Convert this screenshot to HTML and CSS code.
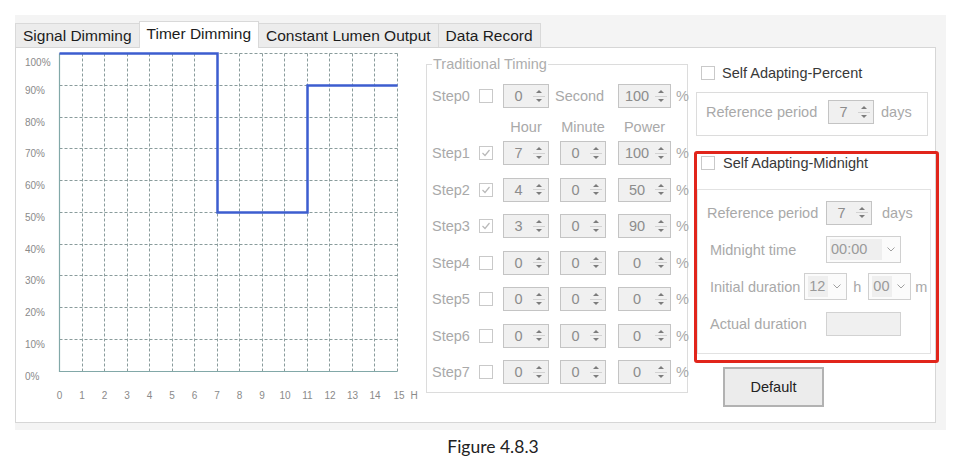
FILE: index.html
```html
<!DOCTYPE html>
<html>
<head>
    <title>Timer Dimming</title>
    <link rel="stylesheet" href="styles.css">
</head>
<body>
    <div class="window">
        <div class="tabs">
            <div class="tab">Signal Dimming</div>
            <div class="tab active">Timer Dimming</div>
            <div class="tab">Constant Lumen Output</div>
            <div class="tab">Data Record</div>
        </div>

        <div class="panel">
            <!-- dimming curve -->
            <svg class="chart" width="405" height="360" viewBox="16 48 405 360">
                <path class="grid" d="M82.5 53.5V371.5M104.5 53.5V371.5M127.5 53.5V371.5M149.5 53.5V371.5M172.5 53.5V371.5M194.5 53.5V371.5M217.5 53.5V371.5M239.5 53.5V371.5M262.5 53.5V371.5M284.5 53.5V371.5M307.5 53.5V371.5M329.5 53.5V371.5M352.5 53.5V371.5M374.5 53.5V371.5M397.5 53.5V371.5
                    M59.5 53.5H397.5M59.5 85.5H397.5M59.5 117.5H397.5M59.5 148.5H397.5M59.5 180.5H397.5M59.5 212.5H397.5M59.5 244.5H397.5M59.5 275.5H397.5M59.5 307.5H397.5M59.5 339.5H397.5"/>
                <path class="axis" d="M59.5 53.5V371.5H397.5"/>
                <path class="curve" d="M59.5 53.5H217.5V212.5H307.5V85.5H397.5"/>
                <g class="labels">
                    <text x="25" y="62">100%</text>
                    <text x="25" y="90.5">90%</text>
                    <text x="25" y="122">80%</text>
                    <text x="25" y="153.5">70%</text>
                    <text x="25" y="185.5">60%</text>
                    <text x="25" y="217">50%</text>
                    <text x="25" y="249">40%</text>
                    <text x="25" y="280.5">30%</text>
                    <text x="25" y="312.5">20%</text>
                    <text x="25" y="344">10%</text>
                    <text x="25" y="376">0%</text>
                </g>
                <g class="labels hours">
                    <text x="59.5" y="395">0</text>
                    <text x="82" y="395">1</text>
                    <text x="104.5" y="395">2</text>
                    <text x="127" y="395">3</text>
                    <text x="149.5" y="395">4</text>
                    <text x="172" y="395">5</text>
                    <text x="194.5" y="395">6</text>
                    <text x="217" y="395">7</text>
                    <text x="239.5" y="395">8</text>
                    <text x="262" y="395">9</text>
                    <text x="285" y="395">10</text>
                    <text x="307.5" y="395">11</text>
                    <text x="330" y="395">12</text>
                    <text x="352.5" y="395">13</text>
                    <text x="375" y="395">14</text>
                    <text x="399" y="395">15</text>
                    <text x="414" y="395">H</text>
                </g>
            </svg>

            <!-- Traditional Timing -->
            <fieldset class="timing">
                <legend>Traditional Timing</legend>

                <div class="step-row">
                    <span>Step0</span>
                    <span class="box"></span>
                    <span class="spin"><span class="val">0</span><span class="arrows"><i class="up"></i><i class="down"></i></span></span>
                    <span class="second">Second</span>
                    <span class="spin power"><span class="val">100</span><span class="arrows"><i class="up"></i><i class="down"></i></span></span>
                    <span>%</span>
                </div>

                <div class="head-row">
                    <span></span>
                    <span></span>
                    <span class="head">Hour</span>
                    <span class="head">Minute</span>
                    <span class="head power">Power</span>
                </div>

                <div class="step-row">
                    <span>Step1</span>
                    <span class="box"><svg viewBox="0 0 12 12"><polyline points="2.5,6 5,8.5 9.5,3"/></svg></span>
                    <span class="spin"><span class="val">7</span><span class="arrows"><i class="up"></i><i class="down"></i></span></span>
                    <span class="spin"><span class="val">0</span><span class="arrows"><i class="up"></i><i class="down"></i></span></span>
                    <span class="spin power"><span class="val">100</span><span class="arrows"><i class="up"></i><i class="down"></i></span></span>
                    <span>%</span>
                </div>
                <div class="step-row">
                    <span>Step2</span>
                    <span class="box"><svg viewBox="0 0 12 12"><polyline points="2.5,6 5,8.5 9.5,3"/></svg></span>
                    <span class="spin"><span class="val">4</span><span class="arrows"><i class="up"></i><i class="down"></i></span></span>
                    <span class="spin"><span class="val">0</span><span class="arrows"><i class="up"></i><i class="down"></i></span></span>
                    <span class="spin power"><span class="val">50</span><span class="arrows"><i class="up"></i><i class="down"></i></span></span>
                    <span>%</span>
                </div>
                <div class="step-row">
                    <span>Step3</span>
                    <span class="box"><svg viewBox="0 0 12 12"><polyline points="2.5,6 5,8.5 9.5,3"/></svg></span>
                    <span class="spin"><span class="val">3</span><span class="arrows"><i class="up"></i><i class="down"></i></span></span>
                    <span class="spin"><span class="val">0</span><span class="arrows"><i class="up"></i><i class="down"></i></span></span>
                    <span class="spin power"><span class="val">90</span><span class="arrows"><i class="up"></i><i class="down"></i></span></span>
                    <span>%</span>
                </div>
                <div class="step-row">
                    <span>Step4</span>
                    <span class="box"></span>
                    <span class="spin"><span class="val">0</span><span class="arrows"><i class="up"></i><i class="down"></i></span></span>
                    <span class="spin"><span class="val">0</span><span class="arrows"><i class="up"></i><i class="down"></i></span></span>
                    <span class="spin power"><span class="val">0</span><span class="arrows"><i class="up"></i><i class="down"></i></span></span>
                    <span>%</span>
                </div>
                <div class="step-row">
                    <span>Step5</span>
                    <span class="box"></span>
                    <span class="spin"><span class="val">0</span><span class="arrows"><i class="up"></i><i class="down"></i></span></span>
                    <span class="spin"><span class="val">0</span><span class="arrows"><i class="up"></i><i class="down"></i></span></span>
                    <span class="spin power"><span class="val">0</span><span class="arrows"><i class="up"></i><i class="down"></i></span></span>
                    <span>%</span>
                </div>
                <div class="step-row">
                    <span>Step6</span>
                    <span class="box"></span>
                    <span class="spin"><span class="val">0</span><span class="arrows"><i class="up"></i><i class="down"></i></span></span>
                    <span class="spin"><span class="val">0</span><span class="arrows"><i class="up"></i><i class="down"></i></span></span>
                    <span class="spin power"><span class="val">0</span><span class="arrows"><i class="up"></i><i class="down"></i></span></span>
                    <span>%</span>
                </div>
                <div class="step-row">
                    <span>Step7</span>
                    <span class="box"></span>
                    <span class="spin"><span class="val">0</span><span class="arrows"><i class="up"></i><i class="down"></i></span></span>
                    <span class="spin"><span class="val">0</span><span class="arrows"><i class="up"></i><i class="down"></i></span></span>
                    <span class="spin power"><span class="val">0</span><span class="arrows"><i class="up"></i><i class="down"></i></span></span>
                    <span>%</span>
                </div>
            </fieldset>

            <!-- Self adapting options -->
            <div class="adapt">
                <div class="check-row percent-row">
                    <span class="box"></span>
                    <span class="check-text">Self Adapting-Percent</span>
                </div>
                <div class="period-box">
                    <span class="period-label">Reference period</span>
                    <span class="spin"><span class="val">7</span><span class="arrows"><i class="up"></i><i class="down"></i></span></span>
                    <span class="unit">days</span>
                </div>

                <div class="highlight">
                    <div class="check-row midnight-row">
                        <span class="box"></span>
                        <span class="check-text">Self Adapting-Midnight</span>
                    </div>
                    <div class="midnight-box">
                        <div class="field">
                            <span class="field-label first">Reference period</span>
                            <span class="spin"><span class="val">7</span><span class="arrows"><i class="up"></i><i class="down"></i></span></span>
                            <span class="unit days">days</span>
                        </div>
                        <div class="field">
                            <span class="field-label">Midnight time</span>
                            <span class="combo wide"><span class="combo-val">00:00</span><svg class="chev" viewBox="0 0 8 5"><polyline points="0.5,0.5 4,4 7.5,0.5"/></svg></span>
                        </div>
                        <div class="field">
                            <span class="field-label short">Initial duration</span>
                            <span class="combo"><span class="combo-val">12</span><svg class="chev" viewBox="0 0 8 5"><polyline points="0.5,0.5 4,4 7.5,0.5"/></svg></span>
                            <span class="unit h">h</span>
                            <span class="combo"><span class="combo-val">00</span><svg class="chev" viewBox="0 0 8 5"><polyline points="0.5,0.5 4,4 7.5,0.5"/></svg></span>
                            <span class="unit m">m</span>
                        </div>
                        <div class="field">
                            <span class="field-label">Actual duration</span>
                            <span class="textbox"></span>
                        </div>
                    </div>
                </div>

                <button type="button" class="default-btn">Default</button>
            </div>
        </div>
    </div>

    <p class="caption">Figure 4.8.3</p>
</body>
</html>
```

FILE: styles.css
```css
body {
    margin: 0;
    background-color: white;
    font-family: "Liberation Sans", Arial, sans-serif;
    font-size: 14.5px;
    color: #a9a9a9;
}

.window {
    width: 921px;
    margin: 15px 0 0 15px;
    padding: 0 10px 7px 0;
    background-color: #f4f4f4;
}

/* tabs */
.tabs {
    display: flex;
    align-items: flex-end;
    height: 32px;
}

.tab {
    box-sizing: border-box;
    height: 24px;
    line-height: 23px;
    padding: 0 7px;
    margin-right: -1px;
    border: 1px solid #d9d9d9;
    border-bottom: none;
    background-color: #ececec;
    color: #1c1c1c;
    font-size: 15.5px;
}

.tab.active {
    position: relative;
    z-index: 1;
    height: 27px;
    line-height: 24px;
    margin-bottom: -1px;
    background-color: white;
}

.panel {
    display: flex;
    align-items: flex-start;
    height: 374px;
    border: 1px solid #d6d6d6;
    background-color: white;
}

/* chart */
.chart {
    display: block;
    flex-shrink: 0;
}

.chart .grid {
    fill: none;
    stroke: #8a9c9c;
    stroke-width: 1;
    stroke-dasharray: 3 2;
}

.chart .axis {
    fill: none;
    stroke: #82a8a8;
    stroke-width: 1.2;
}

.chart .curve {
    fill: none;
    stroke: #3d5dcf;
    stroke-width: 2.5;
}

.chart .labels text {
    font-family: "Liberation Sans", Arial, sans-serif;
    font-size: 10px;
    fill: #8a8a8a;
    dominant-baseline: central;
}

.chart .hours text {
    text-anchor: middle;
}

/* traditional timing */
.timing {
    flex-shrink: 0;
    box-sizing: border-box;
    width: 262px;
    min-width: 0;
    margin: 8px 0 0 5px;
    padding: 12px 0 8px 5px;
    border: 1px solid #dcdcdc;
}

.timing legend {
    padding: 0 1px;
    line-height: 16px;
    color: #adadad;
}

.step-row,
.head-row {
    display: grid;
    grid-template-columns: 47px 24px 57px 58px 58px auto;
    align-items: center;
}

.step-row {
    height: 24px;
}

.step-row + .step-row {
    margin-top: 12.5px;
}

.head-row {
    height: 16px;
    margin: 11px 0 6px;
}

.head {
    width: 46px;
    text-align: center;
}

.head.power {
    width: 53px;
}

.second {
    margin-left: -5px;
}

/* checkbox */
.box {
    box-sizing: border-box;
    display: flex;
    flex-shrink: 0;
    width: 14px;
    height: 14px;
    border: 1px solid #c9c9c9;
    background-color: white;
}

.box svg {
    width: 12px;
    height: 12px;
    fill: none;
    stroke: #b9b9b9;
    stroke-width: 1.2;
}

/* spin box */
.spin {
    box-sizing: border-box;
    display: flex;
    flex-shrink: 0;
    width: 46px;
    height: 24px;
    border: 1px solid #c4c4c4;
    background-color: #f0f0f0;
}

.spin.power {
    width: 53px;
}

.val {
    flex: 1;
    text-align: center;
    line-height: 22px;
    color: #8c8c8c;
}

.arrows {
    display: flex;
    flex-direction: column;
    width: 12px;
    margin: 3px 3px 3px 0;
}

.arrows i {
    flex: 1;
    display: flex;
    align-items: center;
    justify-content: center;
}

.arrows i + i {
    border-top: 1px solid #d2d2d2;
}

.arrows i::before {
    content: "";
    border-left: 3px solid transparent;
    border-right: 3px solid transparent;
}

.arrows .up::before {
    border-bottom: 3px solid #7c7c7c;
}

.arrows .down::before {
    border-top: 3px solid #7c7c7c;
}

/* self adapting column */
.adapt {
    flex-shrink: 0;
    width: 245px;
    margin-left: 6px;
    padding-top: 16px;
}

.check-row {
    display: flex;
    align-items: center;
    height: 18px;
}

.check-text {
    color: #383838;
}

.percent-row .box {
    margin-left: 7px;
}

.percent-row .check-text {
    margin-left: 7px;
}

.period-box {
    box-sizing: border-box;
    display: flex;
    align-items: center;
    width: 232px;
    margin: 10px 0 0 2px;
    padding: 7px 0 11px 9px;
    border: 1px solid #dcdcdc;
}

.period-label {
    width: 122px;
}

.unit {
    margin-left: 7px;
}

.highlight {
    margin-top: 15px;
    padding: 0 5px 6px 0;
    border: 3px solid #e1251b;
    border-radius: 3px;
}

.midnight-row .box {
    margin-left: 4px;
}

.midnight-row .check-text {
    margin-left: 8px;
}

.midnight-box {
    display: flex;
    flex-direction: column;
    gap: 10px;
    margin-top: 17px;
    padding: 9px 0 16px 12px;
    border: 1px solid #e2e2e2;
}

.field {
    display: flex;
    align-items: center;
    height: 27px;
    white-space: nowrap;
}

.field-label {
    flex-shrink: 0;
    width: 116px;
}

.field-label.first {
    width: 119px;
    margin-left: -3px;
}

.field-label.short {
    width: auto;
    margin-right: 4px;
}

.unit.days {
    margin-left: 10px;
}

.unit.h {
    margin: 0 7px 0 6px;
}

.unit.m {
    margin-left: 4px;
}

/* combo box */
.combo {
    box-sizing: border-box;
    display: flex;
    flex-shrink: 0;
    align-items: center;
    width: 43px;
    height: 27px;
    padding: 0 5px 0 3px;
    border: 1px solid #d0d0d0;
    background-color: #fbfbfb;
}

.combo.wide {
    width: 75px;
}

.combo-val {
    flex: 1;
    padding-left: 1px;
    line-height: 21px;
    color: #9a9a9a;
    background-color: #efefef;
    margin-right: 5px;
}

.chev {
    width: 8px;
    height: 5px;
    fill: none;
    stroke: #a0a0a0;
    stroke-width: 1;
}

.textbox {
    box-sizing: border-box;
    width: 75px;
    height: 24px;
    border: 1px solid #d2d2d2;
    background-color: #f0f0f0;
}

.default-btn {
    display: block;
    width: 101px;
    height: 40px;
    margin: 4px 0 0 29px;
    border: 2px solid #b2b2b2;
    background-color: #ececec;
    font-family: "Liberation Sans", Arial, sans-serif;
    font-size: 14.5px;
    color: #222;
}

.caption {
    margin: 7px 0 0;
    padding-left: 28px;
    text-align: center;
    font-family: Lato, "Liberation Sans", sans-serif;
    font-size: 17.5px;
    line-height: 20px;
    color: #222;
}
```
